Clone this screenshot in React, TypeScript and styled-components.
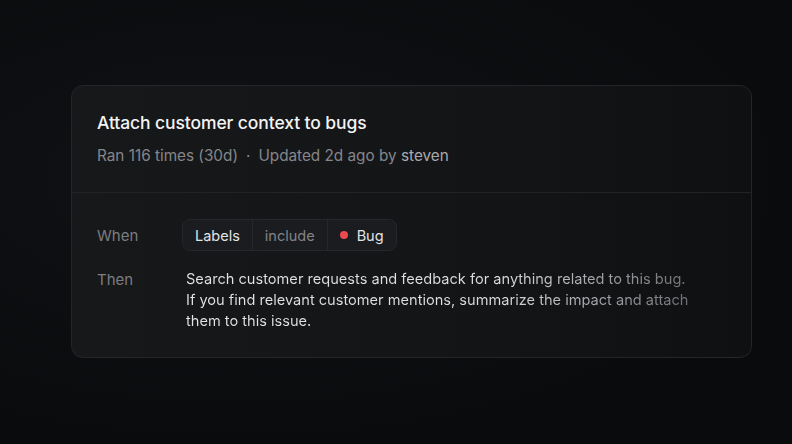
import styled, { createGlobalStyle } from "styled-components";

const GlobalStyle = createGlobalStyle`
  html, body {
    margin: 0;
    padding: 0;
    background: #0a0b0d;
  }
  body {
    font-family: Inter, "Liberation Sans", sans-serif;
    -webkit-font-smoothing: antialiased;
  }
`;

const Page = styled.div`
  width: 792px;
  height: 444px;
  box-sizing: border-box;
  padding: 85px 40px 0 71px;
  background: radial-gradient(ellipse at 30% 40%, #111215 0%, #0a0b0d 70%);
`;

const Card = styled.section`
  width: 681px;
  height: 273px;
  box-sizing: border-box;
  border: 1px solid #242528;
  border-radius: 12px;
  background: linear-gradient(90deg, #17181a 0%, #141517 55%, #0f1012 100%);
  display: flex;
  flex-direction: column;
  overflow: hidden;
`;

const Header = styled.header`
  padding: 26px 25px 0;
  height: 107px;
  box-sizing: border-box;
  border-bottom: 1px solid #222326;
  display: flex;
  flex-direction: column;
  gap: 12px;
`;

const Title = styled.h1`
  margin: 0;
  font-size: 17.5px;
  line-height: 22px;
  font-weight: 500;
  color: #f3f3f4;
  letter-spacing: -0.1px;
`;

const Meta = styled.div`
  display: flex;
  align-items: center;
  gap: 8px;
  font-size: 15.3px;
  line-height: 20px;
  color: #85868a;
`;

const Author = styled.span`
  color: #a9aaae;
`;

const Body = styled.div`
  padding: 26px 25px 0;
  display: grid;
  grid-template-columns: 85px 1fr;
  row-gap: 18px;
  align-items: start;
`;

const RowLabel = styled.span<{ $top?: number }>`
  font-size: 15px;
  line-height: 21px;
  color: #7c7d81;
  padding-top: ${(p) => p.$top ?? 0}px;
`;

const Condition = styled.div`
  display: inline-flex;
  justify-self: start;
  align-items: stretch;
  height: 32px;
  box-sizing: border-box;
  border: 1px solid #26272a;
  border-radius: 8px;
  background: #1b1c1f;
`;

const Segment = styled.span<{ $muted?: boolean }>`
  display: flex;
  align-items: center;
  gap: 9px;
  padding: 0 12px;
  font-size: 14.5px;
  color: ${(p) => (p.$muted ? "#838488" : "#e2e3e5")};
  & + & {
    border-left: 1px solid #26272a;
  }
`;

const Dot = styled.span`
  width: 8px;
  height: 8px;
  border-radius: 50%;
  background: #eb4a4f;
`;

const Instruction = styled.p`
  margin: 0;
  padding-left: 4px;
  max-width: 505px;
  font-size: 14.6px;
  line-height: 21px;
  background: linear-gradient(90deg, #e4e5e7 0%, #dcdddf 62%, #9a9b9f 85%, #6d6e72 100%);
  -webkit-background-clip: text;
  background-clip: text;
  color: transparent;
`;

export default function App() {
  return (
    <>
      <GlobalStyle />
      <Page>
        <Card>
          <Header>
            <Title>Attach customer context to bugs</Title>
            <Meta>
              <span>Ran 116 times (30d)</span>
              <span>·</span>
              <span>
                Updated 2d ago by <Author>steven</Author>
              </span>
            </Meta>
          </Header>
          <Body>
            <RowLabel $top={6}>When</RowLabel>
            <Condition>
              <Segment>Labels</Segment>
              <Segment $muted>include</Segment>
              <Segment>
                <Dot />
                Bug
              </Segment>
            </Condition>
            <RowLabel>Then</RowLabel>
            <Instruction>
              Search customer requests and feedback for anything related to this bug.
              If you find relevant customer mentions, summarize the impact and attach
              them to this issue.
            </Instruction>
          </Body>
        </Card>
      </Page>
    </>
  );
}
